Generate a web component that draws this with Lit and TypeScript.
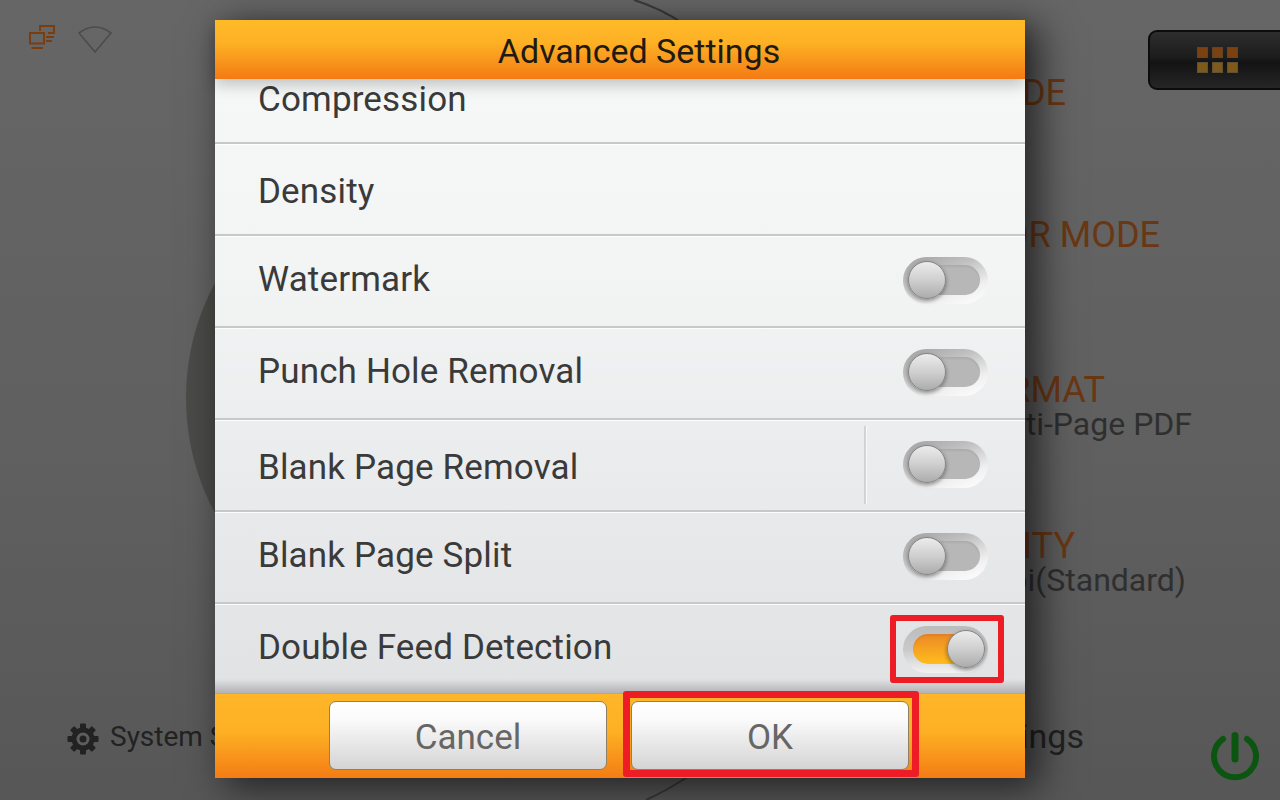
import { LitElement, css, html, svg } from 'lit'
import { customElement } from 'lit/decorators.js'
import { classMap } from 'lit/directives/class-map.js'

const ROWS = [
  { label: 'Compression', kind: 'first' },
  { label: 'Density', kind: 'low' },
  { label: 'Watermark', toggle: 'off' },
  { label: 'Punch Hole Removal', toggle: 'off' },
  { label: 'Blank Page Removal', toggle: 'off', divider: true, kind: 'low' },
  { label: 'Blank Page Split', toggle: 'off' },
  { label: 'Double Feed Detection', toggle: 'on', kind: 'last' },
]

@customElement('app-root')
export class AppRoot extends LitElement {
  static styles = css`
    :host {
      display: block;
      width: 1280px;
      height: 800px;
      font-family: Roboto, "Liberation Sans", sans-serif;
    }

    .screen {
      position: relative;
      width: 1280px;
      height: 800px;
      overflow: hidden;
      display: flex;
      flex-direction: column;
      background: linear-gradient(180deg, #666 0%, #5f5f5f 60%, #575757 100%);
    }

    .backdrop-art {
      position: absolute;
      inset: 0;
    }

    .main {
      position: relative;
      flex: 1;
      display: grid;
      grid-template-columns: 1fr auto;
      grid-template-rows: 1fr;
    }

    .status {
      grid-area: 1 / 1;
      display: flex;
      align-items: flex-start;
      gap: 21px;
      padding: 24px 0 0 28px;
    }

    .menu-btn {
      grid-area: 1 / 2;
      align-self: start;
      width: 140px;
      height: 60px;
      margin: 30px -8px 0 0;
      box-sizing: border-box;
      border-radius: 9px;
      border: 2px solid #0c0c0c;
      background: linear-gradient(180deg, #2e2e2e 0%, #1c1c1c 45%, #131313 55%, #262626 100%);
      display: grid;
      grid-template-columns: repeat(3, 11px);
      grid-auto-rows: 11px;
      gap: 4px;
      justify-content: center;
      align-content: center;
      padding-right: 1px;
    }

    .menu-btn span {
      background: #7c4110;
      box-shadow: inset 0 0 0 1px #5f4429;
    }

    .menu-btn span.low {
      background: #7d5a1b;
      box-shadow: inset 0 0 0 1px #615031;
    }

    .modes {
      grid-area: 1 / 1 / 2 / 3;
      justify-self: end;
      width: 400px;
      margin-right: 88px;
      padding-top: 75px;
      display: flex;
      flex-direction: column;
      align-items: flex-end;
      text-align: right;
      color: #2f2f2f;
      font-size: 32px;
      line-height: 32px;
    }

    .mode-name {
      color: #6a3713;
      font-size: 36px;
      line-height: 36px;
    }

    .m1 { margin-right: 126px; }
    .m2 { margin: 106px 32px 0 0; }
    .m3 { margin-top: 119px; }
    .m3 .mode-name { margin-right: 87px; }
    .m4 { margin: 88px 6px 0 0; }
    .m4 .mode-name { margin-right: 111px; }

    .bottom {
      position: relative;
      height: 100px;
      display: flex;
      color: #222;
      align-items: flex-start;
    }

    .system {
      display: flex;
      align-items: center;
      gap: 11px;
      margin: 18px 0 0 67px;
      font-size: 28px;
      line-height: 38px;
    }

    .gear {
      margin-top: 4px;
    }

    .settings-link {
      margin: 17px 0 0 auto;
      font-size: 34px;
      line-height: 38px;
    }

    .power {
      margin: 32px 20px 0 127px;
    }

    svg {
      display: block;
      overflow: visible;
    }

    .dialog {
      position: absolute;
      left: 215px;
      top: 20px;
      width: 810px;
      height: 758px;
      display: flex;
      flex-direction: column;
      box-shadow: 12px 8px 36px 2px rgba(0, 0, 0, 0.62);
    }

    .title {
      position: relative;
      z-index: 2;
      height: 59px;
      flex-shrink: 0;
      padding-left: 38px;
      text-align: center;
      font-size: 34px;
      line-height: 62px;
      color: #1f1a12;
      background: linear-gradient(180deg, #ffba28 0%, #fdb024 40%, #f47a14 100%);
      box-shadow: 0 6px 14px rgba(0, 0, 0, 0.22);
    }

    .list {
      position: relative;
      flex: 1;
      overflow: hidden;
      background: linear-gradient(180deg, #f6f7f7 0%, #f3f4f4 30%, #e1e2e4 100%);
    }

    .list::after {
      content: '';
      position: absolute;
      left: 0;
      right: 0;
      bottom: 0;
      height: 14px;
      background: linear-gradient(180deg, rgba(170, 170, 172, 0), rgba(170, 170, 172, 0.85));
    }

    .row {
      height: 92px;
      box-sizing: border-box;
      display: flex;
      align-items: center;
      padding: 0 37px 0 43px;
      border-bottom: 2px solid #c7c8c9;
      box-shadow: inset 0 1px 0 rgba(255, 255, 255, 0.85);
      font-size: 35px;
      letter-spacing: 0.15px;
      color: #3a3a3a;
    }

    .row-label {
      flex: 1;
      padding-bottom: 4px;
    }

    .row.first {
      height: 65px;
      box-shadow: none;
    }

    .row.first .row-label {
      padding-bottom: 23px;
    }

    .row.low .row-label {
      padding: 4px 0 0;
    }

    .row.last {
      height: 90px;
      border-bottom: 0;
    }

    .row.last .row-label {
      padding-bottom: 4px;
    }

    .divider {
      width: 2px;
      height: 78px;
      background: #d2d3d4;
      border-right: 1px solid #fafafa;
      margin-right: 36px;
    }

    .toggle {
      position: relative;
      width: 85px;
      height: 47px;
      margin-bottom: 2px;
      box-sizing: border-box;
      border-radius: 24px;
      display: flex;
      align-items: center;
      padding: 0 4px 0 5px;
      background: linear-gradient(160deg, #a2a2a2 0%, #c0c0c0 35%, #f0f0f0 72%, #fff 100%);
    }

    .toggle::before {
      content: '';
      position: absolute;
      left: 10px;
      right: 8px;
      top: 8px;
      bottom: 9px;
      border-radius: 15px;
      background: #b7b7b7;
      box-shadow: inset 0 2px 2px rgba(0, 0, 0, 0.06);
    }

    .toggle.on {
      margin-bottom: 0;
      background: linear-gradient(180deg, #bcbcbc 0%, #c9c9c9 50%, #f2f2f2 100%);
      justify-content: flex-end;
      padding-right: 3px;
    }

    .toggle.on::before {
      background: linear-gradient(180deg, #ec8826 0%, #fbb01f 75%, #ffbb1c 100%);
      right: 16px;
    }

    .knob {
      position: relative;
      width: 38px;
      height: 38px;
      box-sizing: border-box;
      border-radius: 50%;
      border: 1.5px solid #858585;
      background: linear-gradient(180deg, #ececec 0%, #cfcfcf 50%, #acacac 100%);
      box-shadow: 0 2px 4px rgba(0, 0, 0, 0.4);
    }

    .foot {
      position: relative;
      height: 85px;
      flex-shrink: 0;
      box-sizing: border-box;
      display: flex;
      gap: 24px;
      padding: 7px 0 0 114px;
      border-top: 1px solid #c6a868;
      background: linear-gradient(180deg, #ffb628 0%, #fdb024 45%, #f47c14 100%);
    }

    .btn {
      width: 278px;
      height: 69px;
      box-sizing: border-box;
      border: 1px solid #8d8066;
      border-radius: 7px;
      background: linear-gradient(180deg, #ffffff 0%, #fbfbfb 25%, #d4d4d4 100%);
      color: #666;
      font-family: inherit;
      font-size: 35px;
      padding: 4px 0 0;
    }

    .mark {
      position: absolute;
      box-sizing: border-box;
      border: 7px solid #ee1c25;
      border-radius: 3px;
      pointer-events: none;
      z-index: 3;
    }

    .mark-toggle {
      left: 675px;
      top: 595px;
      width: 114px;
      height: 68px;
      border-width: 6px;
    }

    .mark-ok {
      left: 408px;
      top: 671px;
      width: 296px;
      height: 86px;
    }
  `

  private renderRow(row: (typeof ROWS)[number]) {
    return html`
      <div class="row ${row.kind ?? ''}">
        <span class="row-label">${row.label}</span>
        ${row.divider ? html`<div class="divider"></div>` : ''}
        ${row.toggle
          ? html`<div class=${classMap({ toggle: true, on: row.toggle === 'on' })}><div class="knob"></div></div>`
          : ''}
      </div>
    `
  }

  private gear() {
    const teeth = [0, 45, 90, 135, 180, 225, 270, 315]
    return html`
      <svg class="gear" width="32" height="32" viewBox="0 0 32 32">
        ${teeth.map(
          (a) => svg`<rect x="13" y="0.5" width="6" height="7" rx="1" fill="#222"
            transform="rotate(${a} 16 16)" />`
        )}
        <circle cx="16" cy="16" r="11.5" fill="#222" />
        <circle cx="16" cy="16" r="6.5" fill="#5d5d5d" />
        <circle cx="16" cy="16" r="3.5" fill="#222" />
      </svg>
    `
  }

  render() {
    return html`
      <div class="screen">
        <svg class="backdrop-art" width="1280" height="800" viewBox="0 0 1280 800">
          <circle cx="429" cy="398" r="243" fill="#4a4a48" />
          <path d="M634 0 Q660 8 684 24" fill="none" stroke="#3a3a3a" stroke-width="2" />
          <path d="M646 800 Q668 790 692 774" fill="none" stroke="#3a3a3a" stroke-width="2" />
        </svg>
        <div class="main">
          <div class="status">
            <svg width="28" height="26" viewBox="0 0 28 26" fill="none" stroke="#7a3d10" stroke-width="2">
              <path d="M12 7V2H26V9H20" />
              <rect x="2" y="9" width="14" height="10.5" />
              <path d="M18 13h8M18 17h6M3.5 24H15" />
            </svg>
            <svg width="36" height="30" viewBox="0 0 36 30" fill="none" stroke="#4b4b4b" stroke-width="1.6">
              <path d="M2 9 Q18 -3 34 9 L18 28 Z" />
            </svg>
          </div>
          <div class="modes">
            <div class="m1"><div class="mode-name">MODE</div></div>
            <div class="m2"><div class="mode-name">COLOR MODE</div></div>
            <div class="m3"><div class="mode-name">FORMAT</div><div>Multi-Page PDF</div></div>
            <div class="m4"><div class="mode-name">QUALITY</div><div>300dpi(Standard)</div></div>
          </div>
          <div class="menu-btn">
            <span></span><span></span><span></span>
            <span class="low"></span><span class="low"></span><span class="low"></span>
          </div>
        </div>
        <div class="bottom">
          <div class="system">${this.gear()}<span>System Settings</span></div>
          <div class="settings-link">Advanced Settings</div>
          <svg class="power" width="49" height="49" viewBox="0 0 49 49" fill="none" stroke="#0c5510" stroke-linecap="round">
            <path d="M12 7 A21 21 0 1 0 36 7" stroke-width="6" />
            <path d="M24 3.5 V27" stroke-width="7" />
          </svg>
        </div>
        <div class="dialog">
          <div class="title">Advanced Settings</div>
          <div class="list">
            ${ROWS.map((r) => this.renderRow(r))}
          </div>
          <div class="foot">
            <button class="btn">Cancel</button>
            <button class="btn">OK</button>
          </div>
          <div class="mark mark-toggle"></div>
          <div class="mark mark-ok"></div>
        </div>
      </div>
    `
  }
}

declare global {
  interface HTMLElementTagNameMap {
    'app-root': AppRoot
  }
}
